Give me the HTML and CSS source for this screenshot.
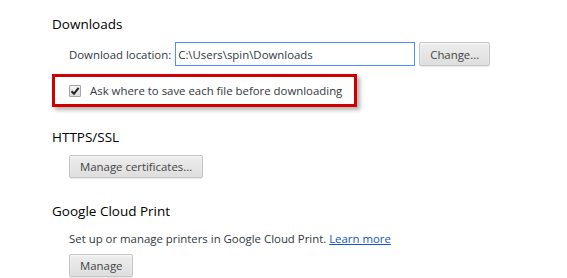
FILE: index.html
```html
<!DOCTYPE html>
<html lang="en">
<head>
    <meta charset="UTF-8">
    <title>Settings</title>
    <link rel="stylesheet" href="styles.css">
</head>
<body>
    <div class="settings">
        <section class="section section-downloads">
            <h3>Downloads</h3>
            <div class="section-body">
                <div class="location-row">
                    <label for="downloadLocation">Download location:</label>
                    <input id="downloadLocation" class="location-input" type="text" value="C:\Users\spin\Downloads" readonly>
                    <button class="btn">Change...</button>
                </div>
            </div>
            <div class="highlight">
                <label class="checkbox-row">
                    <span class="checkbox">
                        <svg width="10" height="10" viewBox="0 0 10 10"><path d="M1.5 5.2 L4 7.8 L8.6 1.8" fill="none" stroke="#222" stroke-width="2"/></svg>
                    </span>
                    <span>Ask where to save each file before downloading</span>
                </label>
            </div>
        </section>

        <section class="section section-certs">
            <h3>HTTPS/SSL</h3>
            <div class="section-body">
                <button class="btn">Manage certificates...</button>
            </div>
        </section>

        <section class="section">
            <h3>Google Cloud Print</h3>
            <div class="section-body">
                <p class="hint">Set up or manage printers in Google Cloud Print. <a href="#">Learn more</a></p>
                <button class="btn">Manage</button>
            </div>
        </section>
    </div>
</body>
</html>
```

FILE: styles.css
```css
* {
    box-sizing: border-box;
}

body {
    margin: 0;
    background: #fff;
    font-family: 'Open Sans', sans-serif;
    font-size: 11.4px;
    color: #303942;
}

.settings {
    padding: 15px 0 0 52px;
}

.section h3 {
    margin: 0;
    font-size: 13.5px;
    font-weight: 400;
    line-height: 19px;
    color: #000;
}

.section {
    margin-bottom: 20px;
}

.section-downloads {
    margin-bottom: 21px;
}

.section-certs {
    margin-bottom: 24px;
}

.section-body {
    padding-left: 17px;
    margin-top: 8px;
}

.location-row {
    display: flex;
    align-items: center;
}

.location-row label {
    margin-right: 4px;
}

.location-input {
    width: 240px;
    height: 24px;
    margin: 0 4px 0 0;
    padding: 0 2px;
    border: 1px solid #4d90fe;
    font-family: inherit;
    font-size: 11.4px;
    color: #303942;
    outline: none;
}

.btn {
    height: 23px;
    padding: 0 10px;
    border: 1px solid #c5c5c5;
    border-radius: 2px;
    background: linear-gradient(#ededed, #dedede);
    box-shadow: 0 1px 0 rgba(0, 0, 0, 0.08), inset 0 1px 2px rgba(255, 255, 255, 0.75);
    font-family: inherit;
    font-size: 11.4px;
    color: #444;
}

.location-row .btn {
    height: 24px;
}

.highlight {
    display: inline-block;
    margin: 8px 0 0 0;
    padding: 6px 12px 6px 14px;
    border: 3px solid #d00000;
    box-shadow: 3px 3px 4px rgba(0, 0, 0, 0.3);
}

.checkbox-row {
    display: flex;
    align-items: center;
    gap: 9px;
}

.checkbox {
    display: flex;
    align-items: center;
    justify-content: center;
    width: 12px;
    height: 12px;
    border: 1px solid #a6a6a6;
    border-radius: 1px;
    background: linear-gradient(#f2f2f2, #dcdcdc);
}

.hint {
    margin: 10px 0 8px;
}

.hint a {
    color: #15c;
}
```
